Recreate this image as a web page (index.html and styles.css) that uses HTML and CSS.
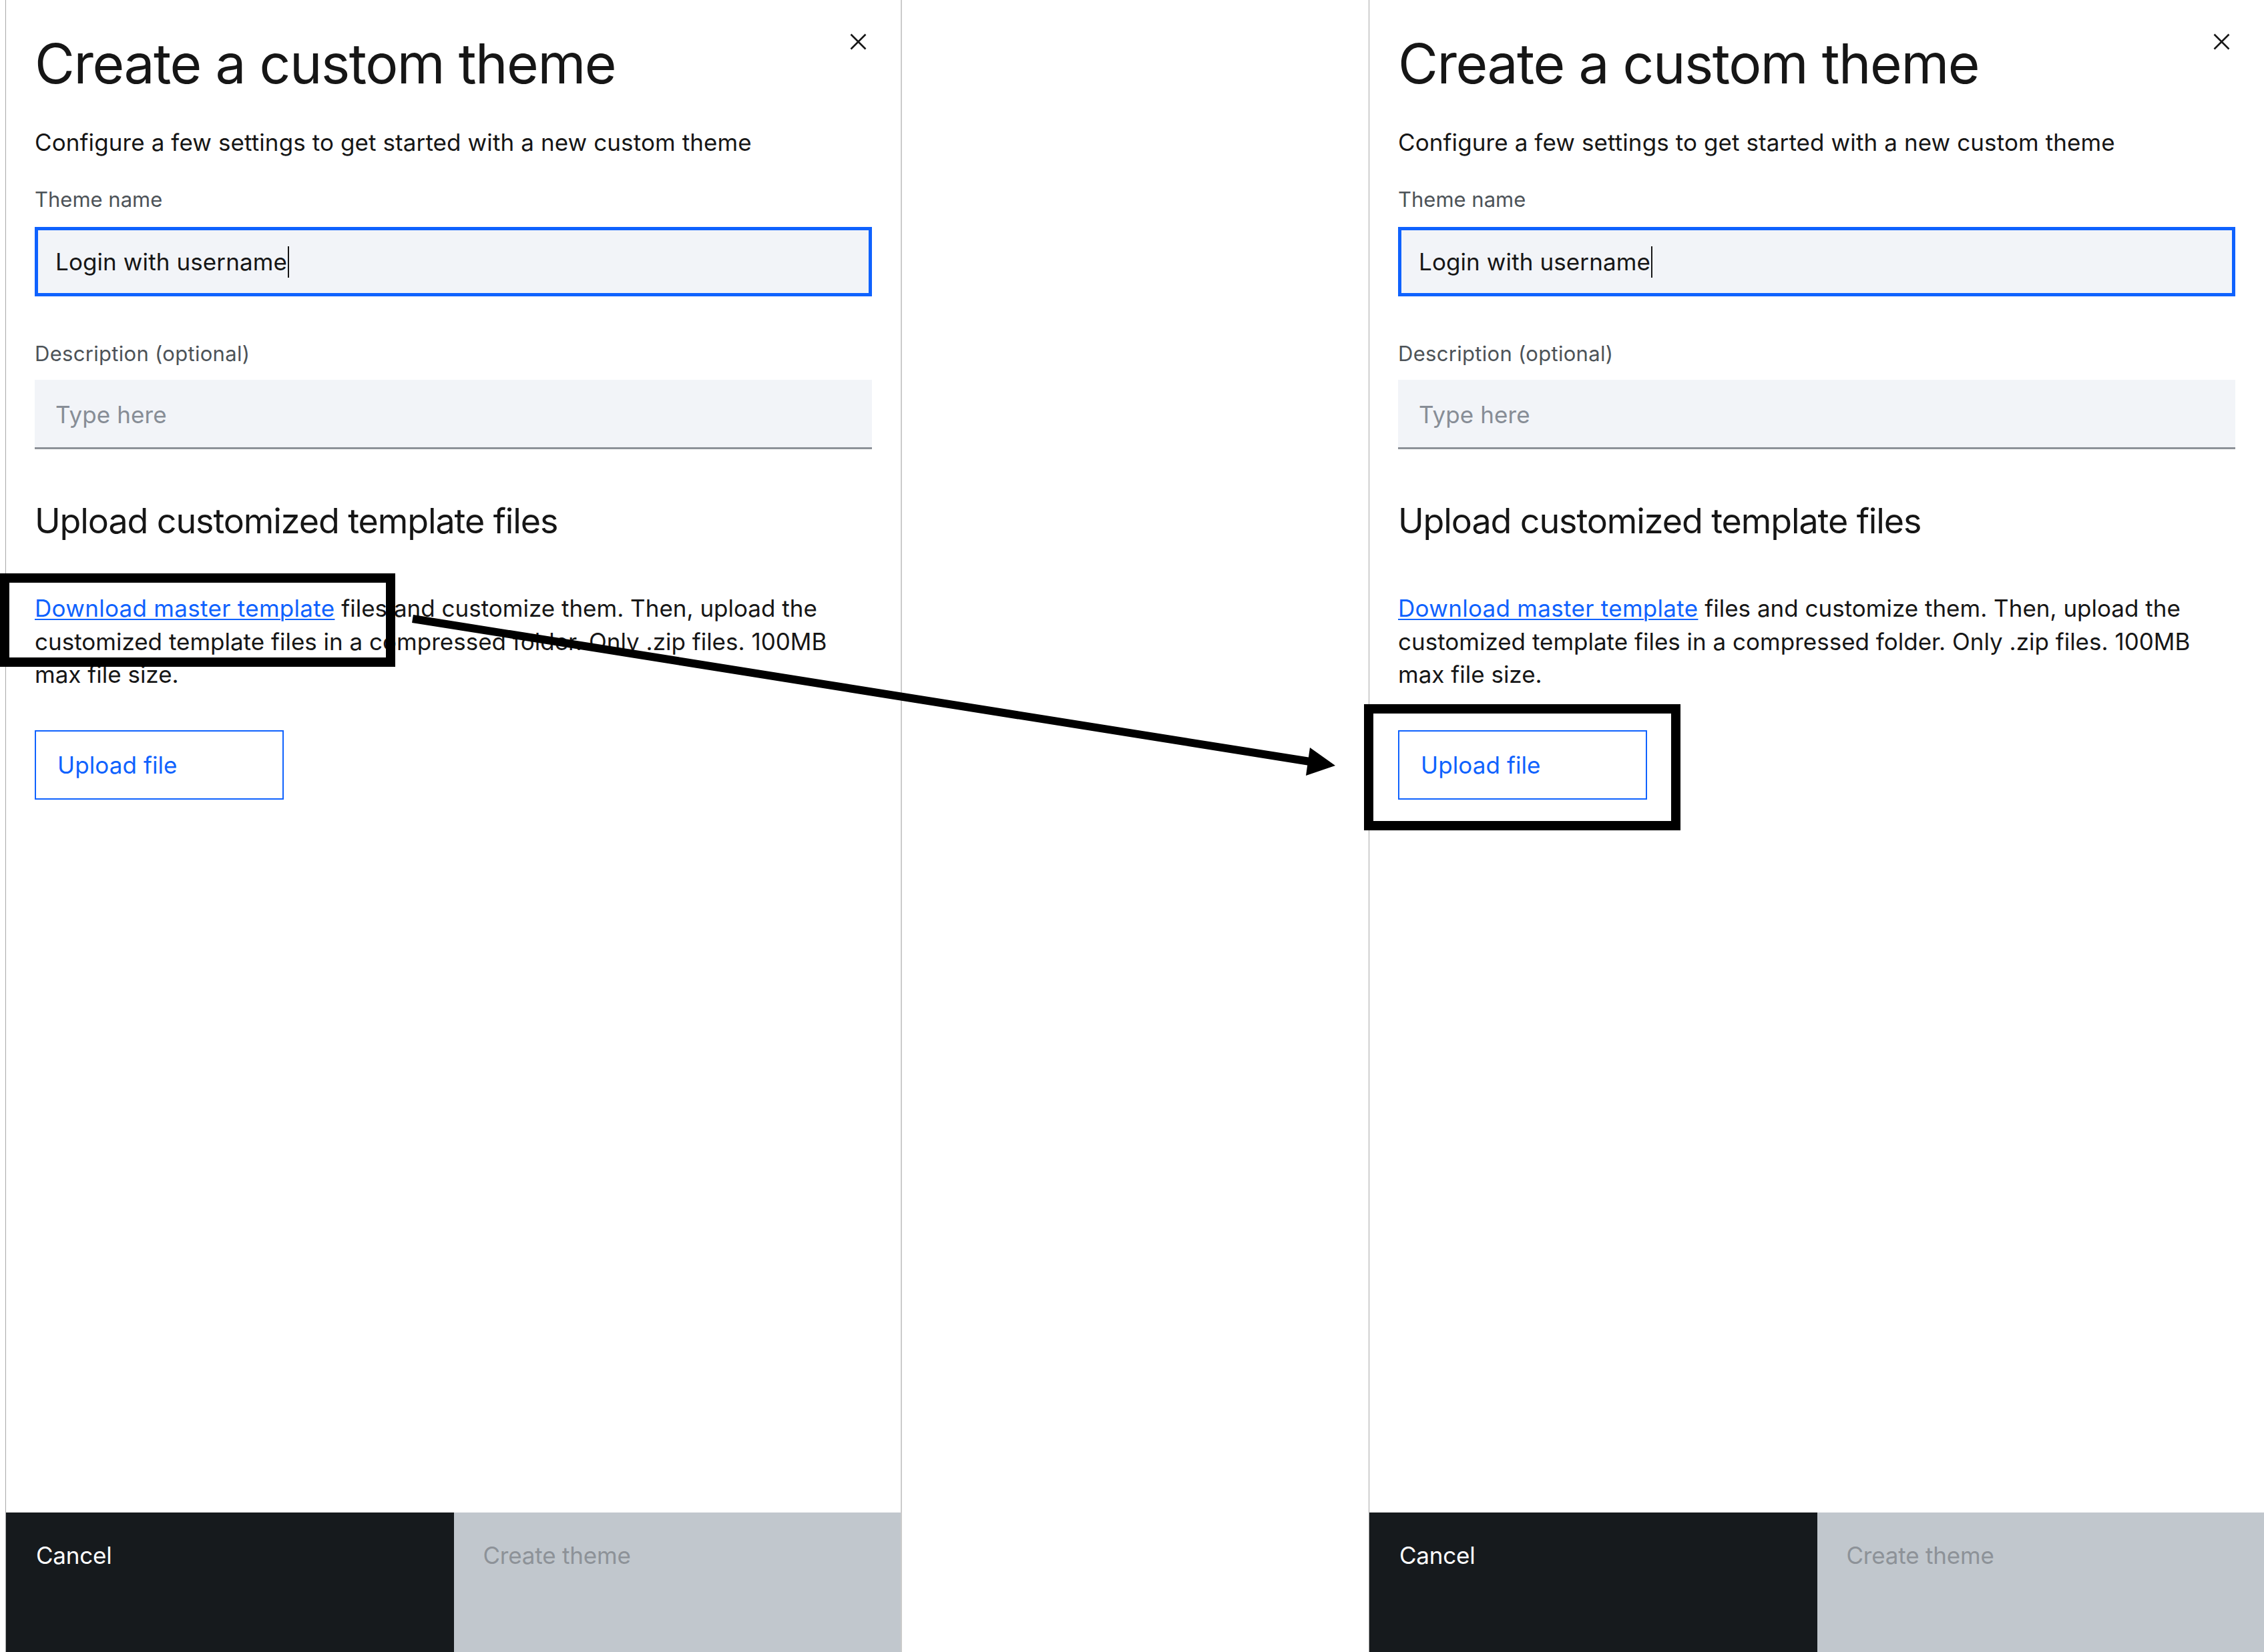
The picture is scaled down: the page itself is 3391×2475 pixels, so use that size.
FILE: index.html
```html
<!DOCTYPE html>
<html lang="en">
<head>
<meta charset="utf-8">
<title>Create a custom theme</title>
<link rel="stylesheet" href="styles.css">
</head>
<body>
<div class="stage">
  <section class="panel">
    <button class="close" aria-label="Close">
      <svg viewBox="0 0 25 25" width="25" height="25"><path d="M1.5 1.5 L23.5 23.5 M23.5 1.5 L1.5 23.5" stroke="#161616" stroke-width="2.6" fill="none"/></svg>
    </button>
    <div class="content">
      <h1 class="title">Create a custom theme</h1>
      <p class="subtitle">Configure a few settings to get started with a new custom theme</p>
      <label class="label">Theme name</label>
      <div class="field field-focus">Login with username<span class="caret"></span></div>
      <label class="label label-desc">Description (optional)</label>
      <div class="field field-empty">Type here</div>
      <h2 class="heading">Upload customized template files</h2>
      <p class="text"><a class="link" href="#">Download master template</a> files and customize them. Then, upload the customized template files in a compressed folder. Only .zip files. 100MB max file size.</p>
      <button class="upload">Upload file</button>
    </div>
    <div class="footer">
      <button class="btn btn-secondary">Cancel</button>
      <button class="btn btn-disabled">Create theme</button>
    </div>
  </section>

  <section class="panel panel-right">
    <button class="close" aria-label="Close">
      <svg viewBox="0 0 25 25" width="25" height="25"><path d="M1.5 1.5 L23.5 23.5 M23.5 1.5 L1.5 23.5" stroke="#161616" stroke-width="2.6" fill="none"/></svg>
    </button>
    <div class="content">
      <h1 class="title">Create a custom theme</h1>
      <p class="subtitle">Configure a few settings to get started with a new custom theme</p>
      <label class="label">Theme name</label>
      <div class="field field-focus">Login with username<span class="caret"></span></div>
      <label class="label label-desc">Description (optional)</label>
      <div class="field field-empty">Type here</div>
      <h2 class="heading">Upload customized template files</h2>
      <p class="text"><a class="link" href="#">Download master template</a> files and customize them. Then, upload the customized template files in a compressed folder. Only .zip files. 100MB max file size.</p>
      <button class="upload">Upload file</button>
    </div>
    <div class="footer">
      <button class="btn btn-secondary">Cancel</button>
      <button class="btn btn-disabled">Create theme</button>
    </div>
  </section>

  <div class="mark mark-link"></div>
  <div class="mark mark-upload"></div>
  <svg class="arrow" width="3391" height="2475" viewBox="0 0 3391 2475">
    <line x1="618" y1="927" x2="1962" y2="1141" stroke="#000" stroke-width="12"/>
    <polygon points="2000,1147 1962,1120 1956,1162" fill="#000"/>
  </svg>
</div>
</body>
</html>
```

FILE: styles.css
```css
html, body {
  margin: 0;
  padding: 0;
  background: #ffffff;
  overflow: hidden;
}

.stage {
  position: relative;
  display: flex;
  gap: 699px;
  padding-left: 8px;
  height: 2475px;
  font-family: "Inter", "Noto Sans", sans-serif;
  color: #161616;
}

.panel {
  position: relative;
  box-sizing: border-box;
  width: 1343px;
  height: 2475px;
  flex: none;
  display: flex;
  flex-direction: column;
  border-left: 1px solid #a8a8a8;
  border-right: 2px solid #cbcbcb;
  background: #ffffff;
}

.close {
  position: absolute;
  top: 50px;
  right: 51px;
  width: 25px;
  height: 25px;
  padding: 0;
  border: 0;
  background: none;
  line-height: 0;
}

.content {
  flex: 1;
  display: flex;
  flex-direction: column;
  align-items: flex-start;
  padding: 46px 43px 0;
}

.title {
  margin: 0;
  font-size: 82px;
  font-weight: 400;
  line-height: 100px;
  letter-spacing: -1.5px;
}

.subtitle {
  margin: 43px 0 0;
  font-size: 35px;
  line-height: 48px;
  letter-spacing: 0.1px;
}

.label {
  display: block;
  margin-top: 42px;
  font-size: 31px;
  line-height: 40px;
  color: #4d5358;
}

.label-desc {
  margin-top: 66px;
  letter-spacing: 0.3px;
}

.field {
  box-sizing: border-box;
  align-self: stretch;
  height: 104px;
  margin-top: 21px;
  display: flex;
  align-items: center;
  padding-left: 26px;
  background: #f2f4f8;
  font-size: 35px;
  letter-spacing: 0.1px;
}

.field-focus {
  border: 5px solid #0f62fe;
  color: #161616;
}

.caret {
  display: inline-block;
  width: 2px;
  height: 47px;
  margin-left: 1px;
  background: #161616;
}

.field-empty {
  margin-top: 19px;
  padding-left: 31px;
  padding-top: 3px;
  border-bottom: 3px solid #8d9298;
  color: #878d96;
}

.heading {
  margin: 76px 0 0;
  font-size: 52px;
  font-weight: 400;
  line-height: 64px;
  letter-spacing: -1.1px;
}

.text {
  max-width: 1215px;
  margin: 74px 0 0;
  font-size: 35px;
  line-height: 49.5px;
  letter-spacing: 0px;
}

.link {
  color: #0f62fe;
  text-decoration: underline;
  text-decoration-thickness: 2px;
  text-underline-offset: 3px;
  letter-spacing: 0.3px;
}

.upload {
  box-sizing: border-box;
  width: 373px;
  height: 104px;
  margin-top: 58px;
  padding: 0 0 0 32px;
  text-align: left;
  border: 2.5px solid #0f62fe;
  background: #ffffff;
  color: #0f62fe;
  font-family: inherit;
  font-size: 35px;
  letter-spacing: 0.1px;
}

.footer {
  display: flex;
  height: 209px;
}

.btn {
  flex: 1;
  display: flex;
  align-items: flex-start;
  border: 0;
  margin: 0;
  padding: 43px 0 0 45px;
  text-align: left;
  font-family: inherit;
  font-size: 35px;
  line-height: normal;
  letter-spacing: -0.2px;
}

.btn-secondary {
  background: #161a1d;
  color: #ffffff;
}

.btn-disabled {
  background: #c1c7cd;
  color: #8d9298;
  padding-left: 44px;
}

/* callout frames drawn over the panels */
.mark {
  position: absolute;
  box-sizing: border-box;
  border: 14px solid #000000;
  pointer-events: none;
}

.mark-link {
  left: 0;
  top: 859px;
  width: 592px;
  height: 140px;
}

.mark-upload {
  left: 2043px;
  top: 1055px;
  width: 474px;
  height: 189px;
}

.arrow {
  position: absolute;
  left: 0;
  top: 0;
  pointer-events: none;
}
```
